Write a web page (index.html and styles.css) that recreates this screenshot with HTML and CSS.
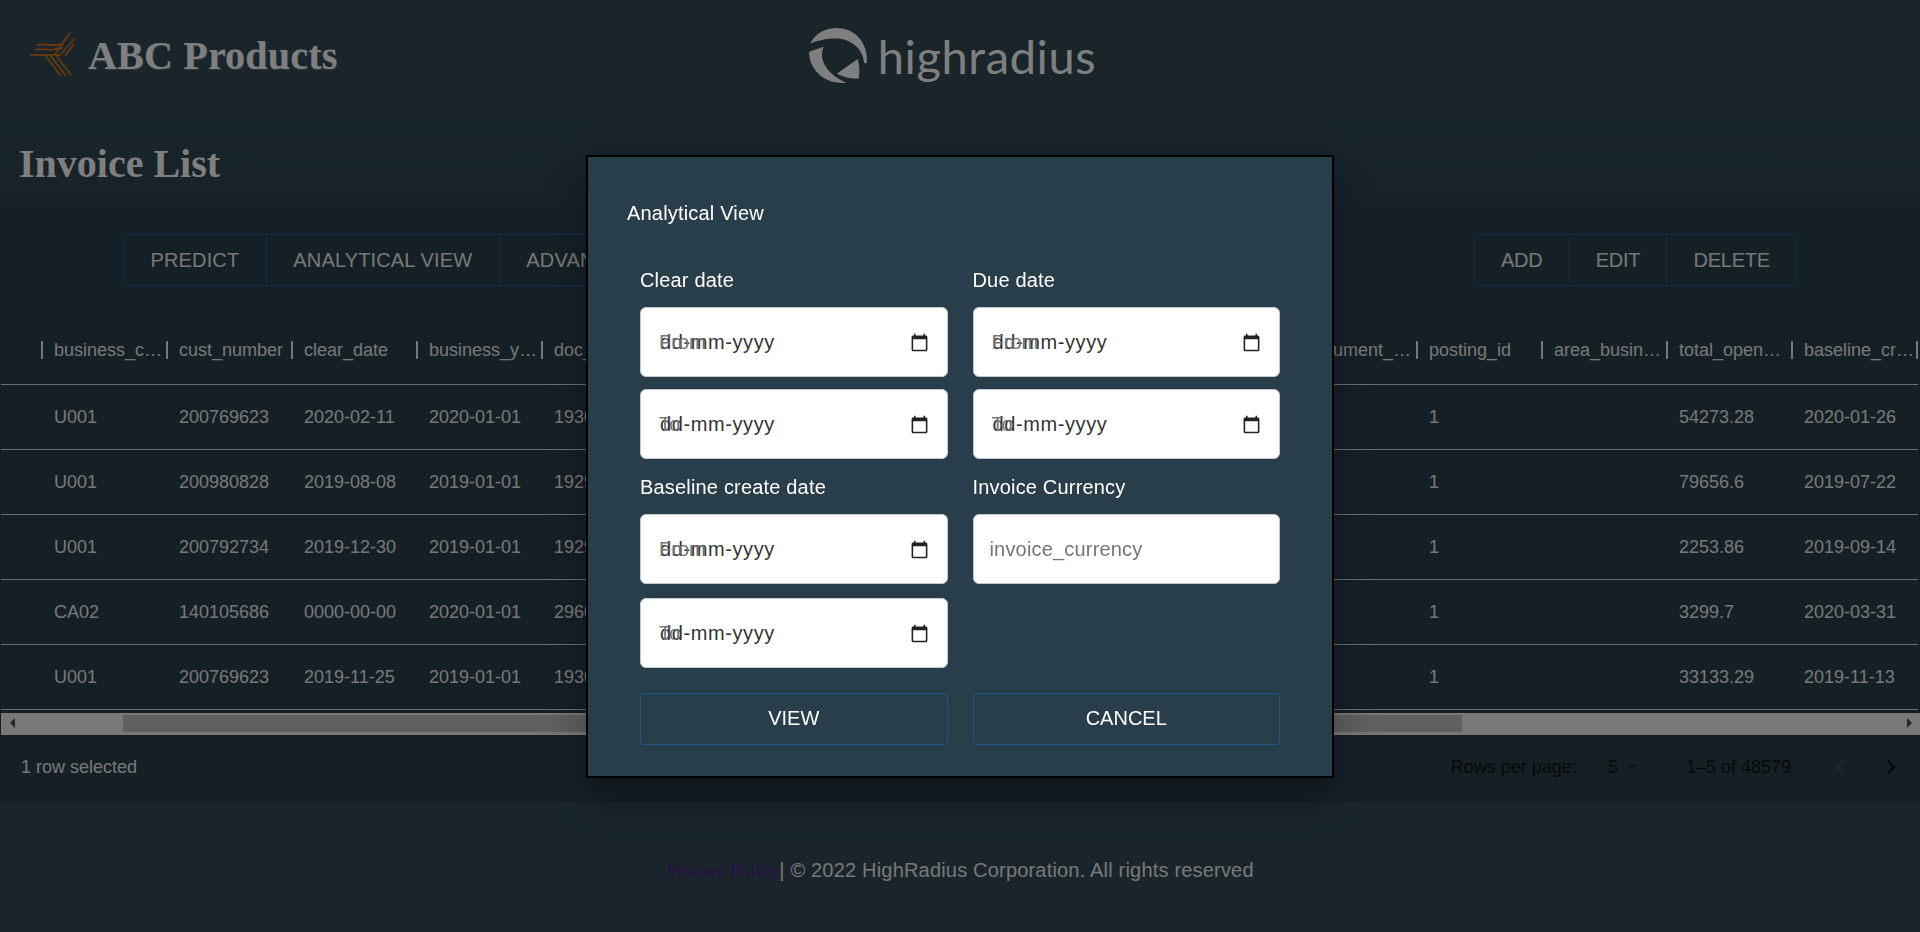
FILE: index.html
```html
<!DOCTYPE html>
<html lang="en">
<head>
    <meta charset="UTF-8">
    <meta name="viewport" content="width=device-width, initial-scale=1.0">
    <title>Invoice List</title>
    <link rel="stylesheet" href="styles.css">
</head>
<body>
    <header class="top-bar">
        <div class="brand">
            <svg class="brand-mark" viewBox="0 0 60 60" fill="none" stroke="#c8741e" stroke-width="1.8">
                <path d="M5 29H35"/>
                <path d="M10 24C17 21 22 26 30 23C33 22 35 23 38 22"/>
                <path d="M12 19C20 17 26 21 39 18"/>
                <path d="M30 28L45 7"/>
                <path d="M35 29L50 12M40 30L49 18"/>
                <path d="M20 29L36 50M25 29L41 50M30 28L46 49"/>
            </svg>
            <span class="brand-name">ABC Products</span>
        </div>
        <div class="hr-logo">
            <svg class="hr-mark" viewBox="6 6 60 58" fill="#fff">
                <path d="M9 23C15 12 25 8 35 8C52 8 65 22 64 41C62 43 61 42 61 40C60 28 48 18 34 18C24 18 16 20 9 23Z"/>
                <path d="M8 31L22 26C18 36 21 50 44 61C25 63 8 50 8 31Z"/>
                <path d="M35 52L55 38C57 45 57 52 56 57C48 57 42 56 35 52Z"/>
            </svg>
            <span class="hr-name">highradius</span>
        </div>
        <div></div>
    </header>

    <h1 class="page-title">Invoice List</h1>

    <main class="grid-area">
        <div class="toolbar">
            <div class="btn-group">
                <button>PREDICT</button>
                <button>ANALYTICAL VIEW</button>
                <button>ADVANCE SEARCH</button>
            </div>
            <div class="btn-group btn-group-right">
                <button>ADD</button>
                <button>EDIT</button>
                <button>DELETE</button>
            </div>
        </div>

        <div class="table-wrap">
            <table class="data-table">
                <thead>
                    <tr>
                        <th class="check-col"><div class="head-cell"></div></th>
                        <th><div class="head-cell"><span>business_code</span></div></th>
                        <th><div class="head-cell"><span>cust_number</span></div></th>
                        <th><div class="head-cell"><span>clear_date</span></div></th>
                        <th><div class="head-cell"><span>business_year</span></div></th>
                        <th><div class="head-cell"><span>doc_id</span></div></th>
                        <th><div class="head-cell"><span>posting_date</span></div></th>
                        <th><div class="head-cell"><span>document_create_date</span></div></th>
                        <th><div class="head-cell"><span>due_in_date</span></div></th>
                        <th><div class="head-cell"><span>invoice_currency</span></div></th>
                        <th><div class="head-cell"><span>cust_payment_terms</span></div></th>
                        <th><div class="head-cell"><span>document_type</span></div></th>
                        <th><div class="head-cell"><span>posting_id</span></div></th>
                        <th><div class="head-cell"><span>area_business</span></div></th>
                        <th><div class="head-cell"><span>total_open_amount</span></div></th>
                        <th><div class="head-cell"><span>baseline_create_date</span></div></th>
                    </tr>
                </thead>
                <tbody>
                    <tr><td></td><td>U001</td><td>200769623</td><td>2020-02-11</td><td>2020-01-01</td><td>1930438491</td><td></td><td></td><td></td><td></td><td></td><td></td><td>1</td><td></td><td>54273.28</td><td>2020-01-26</td></tr>
                    <tr><td></td><td>U001</td><td>200980828</td><td>2019-08-08</td><td>2019-01-01</td><td>1929646410</td><td></td><td></td><td></td><td></td><td></td><td></td><td>1</td><td></td><td>79656.6</td><td>2019-07-22</td></tr>
                    <tr><td></td><td>U001</td><td>200792734</td><td>2019-12-30</td><td>2019-01-01</td><td>1929873765</td><td></td><td></td><td></td><td></td><td></td><td></td><td>1</td><td></td><td>2253.86</td><td>2019-09-14</td></tr>
                    <tr><td></td><td>CA02</td><td>140105686</td><td>0000-00-00</td><td>2020-01-01</td><td>2960623488</td><td></td><td></td><td></td><td></td><td></td><td></td><td>1</td><td></td><td>3299.7</td><td>2020-03-31</td></tr>
                    <tr><td></td><td>U001</td><td>200769623</td><td>2019-11-25</td><td>2019-01-01</td><td>1930147974</td><td></td><td></td><td></td><td></td><td></td><td></td><td>1</td><td></td><td>33133.29</td><td>2019-11-13</td></tr>
                </tbody>
            </table>
        </div>

        <div class="h-scroll">
            <div class="arrow-box"><span class="arrow-left"></span></div>
            <div class="thumb"></div>
            <div class="track-rest"></div>
            <div class="arrow-box"><span class="arrow-right"></span></div>
        </div>

        <div class="grid-footer">
            <span>1 row selected</span>
            <div class="pagination">
                <span>Rows per page:</span>
                <span class="page-size">5
                    <svg class="select-arrow" viewBox="0 0 24 24"><path d="M7 10l5 5 5-5z"/></svg>
                </span>
                <span class="page-range">1–5 of 48579</span>
                <svg class="page-btn disabled" viewBox="0 0 24 24"><path d="M15.41 7.41 14 6l-6 6 6 6 1.41-1.41L10.83 12z"/></svg>
                <svg class="page-btn" viewBox="0 0 24 24"><path d="M10 6 8.59 7.41 13.17 12l-4.58 4.59L10 18l6-6z"/></svg>
            </div>
        </div>
    </main>

    <footer class="page-footer">
        <a href="#" class="privacy">Privacy Policy</a><span>| © 2022 HighRadius Corporation. All rights reserved</span>
    </footer>

    <div class="backdrop">
        <div class="modal">
            <h2 class="modal-title">Analytical View</h2>
            <div class="field-grid">
                <div class="field">
                    <label>Clear date</label>
                    <div class="date-input"><span class="date-hint">From</span><span class="date-text">dd-mm-yyyy</span>
                        <svg class="cal-icon" viewBox="0 0 24 24"><path d="M20 3h-1V1h-2v2H7V1H5v2H4c-1.1 0-2 .9-2 2v16c0 1.1.9 2 2 2h16c1.1 0 2-.9 2-2V5c0-1.1-.9-2-2-2zm0 18H4V8h16v13z"/></svg>
                    </div>
                    <div class="date-input"><span class="date-hint">To</span><span class="date-text">dd-mm-yyyy</span>
                        <svg class="cal-icon" viewBox="0 0 24 24"><path d="M20 3h-1V1h-2v2H7V1H5v2H4c-1.1 0-2 .9-2 2v16c0 1.1.9 2 2 2h16c1.1 0 2-.9 2-2V5c0-1.1-.9-2-2-2zm0 18H4V8h16v13z"/></svg>
                    </div>
                </div>
                <div class="field">
                    <label>Due date</label>
                    <div class="date-input"><span class="date-hint">From</span><span class="date-text">dd-mm-yyyy</span>
                        <svg class="cal-icon" viewBox="0 0 24 24"><path d="M20 3h-1V1h-2v2H7V1H5v2H4c-1.1 0-2 .9-2 2v16c0 1.1.9 2 2 2h16c1.1 0 2-.9 2-2V5c0-1.1-.9-2-2-2zm0 18H4V8h16v13z"/></svg>
                    </div>
                    <div class="date-input"><span class="date-hint">To</span><span class="date-text">dd-mm-yyyy</span>
                        <svg class="cal-icon" viewBox="0 0 24 24"><path d="M20 3h-1V1h-2v2H7V1H5v2H4c-1.1 0-2 .9-2 2v16c0 1.1.9 2 2 2h16c1.1 0 2-.9 2-2V5c0-1.1-.9-2-2-2zm0 18H4V8h16v13z"/></svg>
                    </div>
                </div>
                <div class="field field-low">
                    <label>Baseline create date</label>
                    <div class="date-input"><span class="date-hint">From</span><span class="date-text">dd-mm-yyyy</span>
                        <svg class="cal-icon" viewBox="0 0 24 24"><path d="M20 3h-1V1h-2v2H7V1H5v2H4c-1.1 0-2 .9-2 2v16c0 1.1.9 2 2 2h16c1.1 0 2-.9 2-2V5c0-1.1-.9-2-2-2zm0 18H4V8h16v13z"/></svg>
                    </div>
                    <div class="date-input"><span class="date-hint">To</span><span class="date-text">dd-mm-yyyy</span>
                        <svg class="cal-icon" viewBox="0 0 24 24"><path d="M20 3h-1V1h-2v2H7V1H5v2H4c-1.1 0-2 .9-2 2v16c0 1.1.9 2 2 2h16c1.1 0 2-.9 2-2V5c0-1.1-.9-2-2-2zm0 18H4V8h16v13z"/></svg>
                    </div>
                </div>
                <div class="field">
                    <label>Invoice Currency</label>
                    <input type="text" class="text-input" placeholder="invoice_currency">
                </div>
            </div>
            <div class="modal-actions">
                <button>VIEW</button>
                <button>CANCEL</button>
            </div>
        </div>
    </div>
</body>
</html>
```

FILE: styles.css
```css
* {
    box-sizing: border-box;
}
html, body {
    height: 100%;
}
body {
    margin: 0;
    overflow: hidden;
    font-family: "Liberation Sans", Arial, sans-serif;
    background-color: #324957;
    color: #eee;
}

/* header */
.top-bar {
    display: grid;
    grid-template-columns: 1fr auto 1fr;
    align-items: center;
    height: 112px;
    padding: 0 42px 0 25px;
}
.brand {
    display: flex;
    align-items: center;
    gap: 3px;
}
.brand-mark {
    width: 60px;
    height: 60px;
}
.brand-name {
    padding-bottom: 2px;
    font-family: "Liberation Serif", "Times New Roman", serif;
    font-weight: bold;
    font-size: 40px;
    letter-spacing: 0.2px;
    color: #fff;
    text-shadow: 1px 1px 1px rgba(255, 255, 255, 0.25);
}
.hr-logo {
    display: flex;
    align-items: center;
    gap: 9px;
}
.hr-mark {
    width: 62px;
    height: 60px;
}
.hr-name {
    font-family: Lato, sans-serif;
    font-weight: 400;
    font-size: 47px;
    letter-spacing: 0.6px;
    color: #fff;
}
.page-title {
    margin: 0;
    height: 95px;
    padding: 30px 0 0 19px;
    font-family: "Liberation Serif", "Times New Roman", serif;
    font-size: 40px;
    line-height: 44px;
    color: #fff;
    background: linear-gradient(#324957, #2d4351);
}

/* table section */
.grid-area {
    height: 595px;
    background-color: #2a3f4d;
    padding-top: 27px;
}
.toolbar {
    display: flex;
    justify-content: space-between;
    padding: 0 123px;
}
.btn-group {
    display: flex;
    height: 52px;
    border: 1px solid #1f5f9e;
    border-radius: 5px;
}
.btn-group button {
    padding: 0 26.5px;
    background: none;
    border: none;
    border-right: 1px solid #1f5f9e;
    font: 20px "Liberation Sans", Arial, sans-serif;
    letter-spacing: 0.15px;
    color: #eee;
}
.btn-group button:last-child {
    border-right: none;
}
.btn-group-right button {
    padding: 0 26px;
    letter-spacing: -0.2px;
}
.table-wrap {
    margin: 29px 0 0 1px;
    overflow: hidden;
}
.data-table {
    width: 1917px;
    table-layout: fixed;
    border-collapse: collapse;
    font-size: 18px;
}
.data-table th,
.data-table td {
    width: 125px;
    padding: 0 0 0 11px;
    text-align: left;
    font-weight: normal;
    white-space: nowrap;
    overflow: hidden;
}
.data-table th {
    height: 69px;
    border-bottom: 1px solid #dcdcdc;
    padding-top: 2px;
}
.data-table td {
    height: 65px;
    border-bottom: 1px solid #dcdcdc;
    padding-top: 2px;
}
.data-table .check-col {
    width: 42px;
}
.head-cell {
    display: flex;
    height: 18px;
    line-height: 18px;
    padding-right: 1px;
    border-right: 2px solid #eee;
}
.head-cell span {
    height: 24px;
    overflow: hidden;
    text-overflow: ellipsis;
}

/* drawn scrollbar */
.h-scroll {
    display: flex;
    align-items: stretch;
    height: 22px;
    margin: 3px 0 0 1px;
    background-color: #f1f1f1;
    padding: 2px 0 3px;
}
.arrow-box {
    display: flex;
    align-items: center;
    justify-content: center;
    width: 22px;
}
.arrow-left {
    border: 5px solid transparent;
    border-left: none;
    border-right-color: #505050;
}
.arrow-right {
    border: 5px solid transparent;
    border-right: none;
    border-left-color: #505050;
}
.thumb {
    width: 1339px;
    margin-left: 100px;
    background-color: #c1c1c1;
}
.track-rest {
    flex: 1;
}

.grid-footer {
    display: flex;
    align-items: center;
    justify-content: space-between;
    height: 63px;
    padding: 2px 15px 0 21px;
    font-size: 18px;
}
.pagination {
    display: flex;
    align-items: center;
    color: #111;
}
.page-size {
    display: flex;
    align-items: center;
    margin-left: 31px;
    gap: 1px;
}
.select-arrow {
    width: 26px;
    height: 26px;
    margin-right: -2px;
    fill: #222;
}
.page-range {
    margin: 0 35px 0 43px;
}
.page-btn {
    width: 28px;
    height: 28px;
    fill: #111;
}
.page-btn.disabled {
    margin-right: 23px;
    fill: #3a5060;
}

/* footer */
.page-footer {
    display: flex;
    justify-content: center;
    align-items: baseline;
    padding-top: 57px;
    font-size: 20px;
    letter-spacing: 0.19px;
}
.privacy {
    font-family: "Liberation Serif", "Times New Roman", serif;
    font-size: 19.3px;
    letter-spacing: 0;
    color: #551a8b;
    text-decoration: none;
}

/* dialog */
.backdrop {
    position: fixed;
    top: 0;
    left: 0;
    width: 100%;
    height: 100%;
    display: flex;
    align-items: center;
    justify-content: center;
    background-color: rgba(0, 0, 0, 0.5);
}
.modal {
    width: 748px;
    height: 623px;
    padding: 45px 52px 0;
    border: 2px solid #000;
    background-color: #293e4b;
    color: #fff;
    letter-spacing: 0.18px;
    box-shadow: 0 11px 15px -7px rgba(0, 0, 0, 0.2), 0 24px 38px 3px rgba(0, 0, 0, 0.14), 0 9px 46px 8px rgba(0, 0, 0, 0.12);
}
.modal-title {
    margin: 0 0 44px -13px;
    font-size: 20px;
    font-weight: normal;
    line-height: 23px;
}
.field-grid {
    display: grid;
    grid-template-columns: 1fr 1fr;
    column-gap: 25px;
    row-gap: 17px;
}
.field {
    display: flex;
    flex-direction: column;
    gap: 12px;
}
.field-low {
    gap: 14px;
}
.field label {
    margin-bottom: 3px;
    font-size: 20px;
    line-height: 23px;
}
.field-low label {
    margin-bottom: 1px;
}
.date-input {
    position: relative;
    display: flex;
    align-items: center;
    justify-content: space-between;
    height: 70px;
    padding: 1px 19px 0;
    background-color: #fff;
    border: 1px solid #c6cacd;
    border-radius: 6px;
    font-size: 20px;
    color: #333;
    letter-spacing: 0;
}
.date-text {
    letter-spacing: 0.6px;
}
.date-hint {
    position: absolute;
    left: 18px;
    color: #777;
}
.cal-icon {
    width: 19px;
    height: 19px;
    margin-right: -1px;
    fill: #222;
}
.text-input {
    height: 70px;
    padding: 1px 16px 0;
    background-color: #fff;
    border: 1px solid #c6cacd;
    border-radius: 6px;
    font: 20px "Liberation Sans", Arial, sans-serif;
    letter-spacing: 0.18px;
    outline: none;
}
.text-input::placeholder {
    color: #757575;
}
.modal-actions {
    display: grid;
    grid-template-columns: 1fr 1fr;
    column-gap: 25px;
    margin-top: 25px;
}
.modal-actions button {
    height: 52px;
    background: none;
    border: 1px solid #1f5587;
    border-radius: 4px;
    font: 20px "Liberation Sans", Arial, sans-serif;
    color: #fff;
}
```
